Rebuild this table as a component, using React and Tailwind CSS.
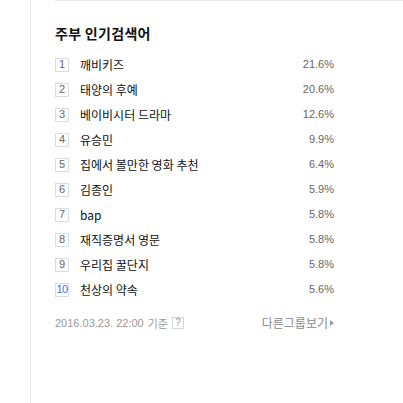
const items = [
  { name: '깨비키즈', pct: '21.6%' },
  { name: '태양의 후예', pct: '20.6%' },
  { name: '베이비시터 드라마', pct: '12.6%' },
  { name: '유승민', pct: '9.9%' },
  { name: '집에서 볼만한 영화 추천', pct: '6.4%' },
  { name: '김종인', pct: '5.9%' },
  { name: 'bap', pct: '5.8%' },
  { name: '재직증명서 영문', pct: '5.8%' },
  { name: '우리집 꿀단지', pct: '5.8%' },
  { name: '천상의 약속', pct: '5.6%' },
]

export default function App() {
  return (
    <div className="w-[403px] h-[403px] bg-white flex overflow-hidden font-['Noto_Sans_CJK_KR','Noto_Sans',sans-serif]">
      <div className="w-[30px] shrink-0" />
      <div className="flex-1 border-l border-[#e8e8e8] pl-[24px]">
        <div className="border-t border-[#e5e5e5] pt-[24px] pr-[69px]">
          <h2 className="h-[16px] leading-[16px] text-[14px] font-bold text-[#111] tracking-[0.3px]">
            주부 인기검색어
          </h2>
          <ul className="mt-[11px]">
            {items.map((it, i) => (
              <li key={i} className="h-[25px] flex items-center">
                <span
                  className={
                    i === 9
                      ? "w-[14px] h-[14px] border border-[#dcdcdc] flex items-center justify-center text-[11px] leading-none shrink-0 font-['Liberation_Sans',Arial,sans-serif] text-[#3d6fd1] tracking-[-0.5px]"
                      : "w-[14px] h-[14px] border border-[#dcdcdc] flex items-center justify-center text-[11px] leading-none shrink-0 font-['Liberation_Sans',Arial,sans-serif] text-[#666]"
                  }
                >
                  {i + 1}
                </span>
                <span className="ml-[11px] text-[12px] text-[#111] flex-1">{it.name}</span>
                <span className="text-[11px] text-[#666] font-['Liberation_Sans',Arial,sans-serif]">
                  {it.pct}
                </span>
              </li>
            ))}
          </ul>
          <div className="mt-[13px] h-[16px] flex items-center text-[11px] text-[#999]">
            <span className="font-['Liberation_Sans',Arial,sans-serif]">2016.03.23. 22:00</span>
            <span className="ml-[4px]">기준</span>
            <span className="ml-[4px] w-[12px] h-[12px] border border-[#d5d5d5] flex items-center justify-center text-[10px] leading-none text-[#999] font-['Liberation_Sans',Arial,sans-serif]">
              ?
            </span>
            <span className="ml-auto flex items-center text-[12px] text-[#888]">
              다른그룹보기
              <span className="ml-[2px] w-0 h-0 border-y-[3px] border-y-transparent border-l-[4px] border-l-[#999]" />
            </span>
          </div>
        </div>
      </div>
    </div>
  )
}
